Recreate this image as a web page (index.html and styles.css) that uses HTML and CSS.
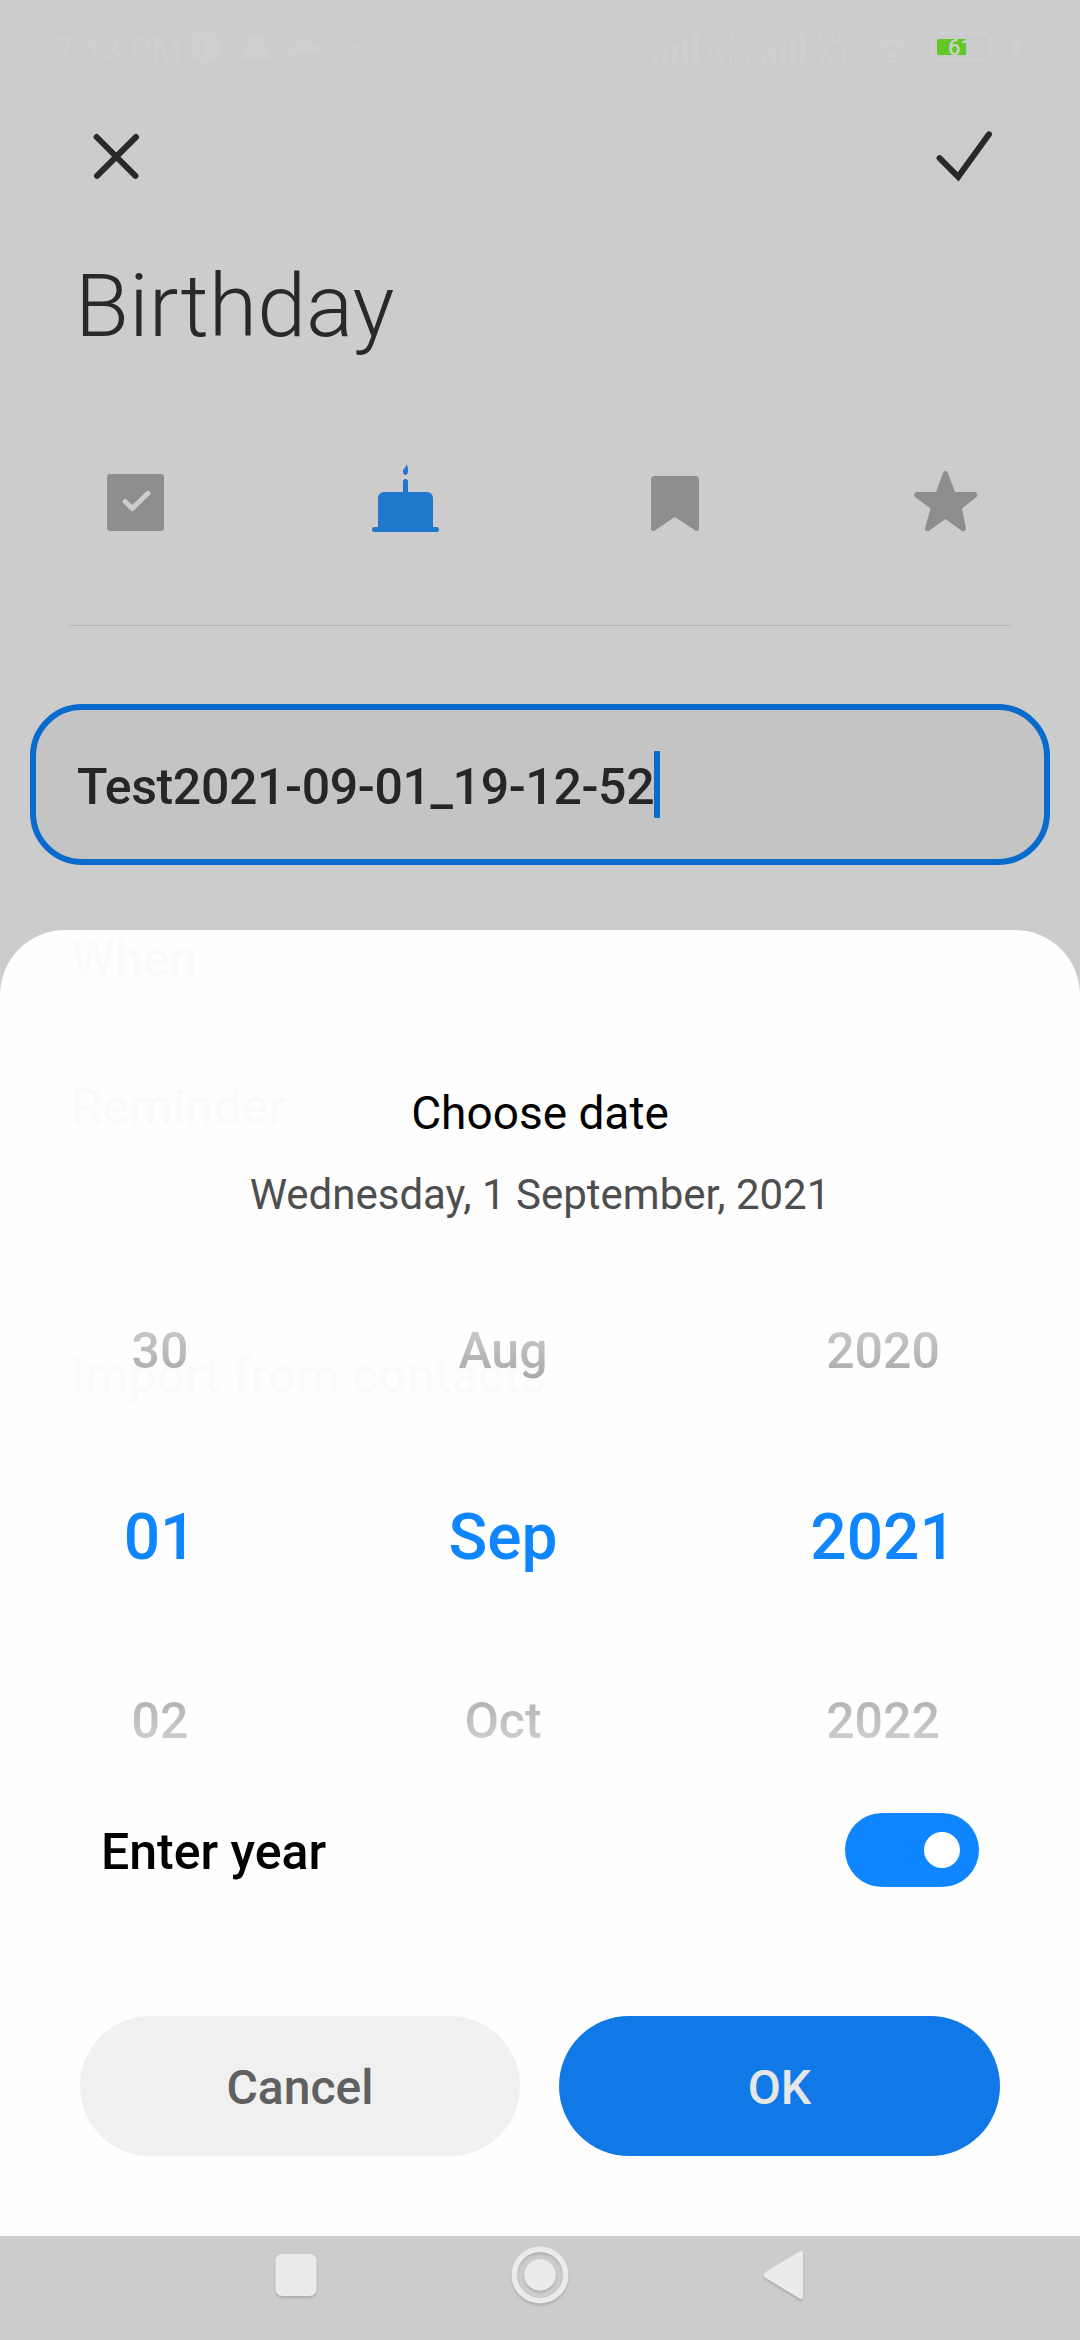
FILE: index.html
```html
<!DOCTYPE html>
<html lang="en">
<head>
<meta charset="utf-8">
<title>Birthday</title>
<link rel="stylesheet" href="styles.css">
</head>
<body>
<div class="screen">
  <div class="status">
    <span class="clock">7:13 PM</span>
    <svg class="notifs" width="210" height="40" viewBox="186 28 210 40">
      <path fill-rule="evenodd" d="M206 31a16 16 0 1 0 .1 0zM199 38h4v18h-4zM208 38h4v4h-4z"/>
      <path d="M240 58q0-4 4-6 2-4 4-14 8-10 16 0 2 10 4 14 4 2 4 6-4 2-8 0-8 4-16 0-4 2-8 0z"/>
      <path d="M290 54q-2-6 5-9 4-8 12-6l13 9q4 4 2 6z"/>
      <circle cx="355" cy="47" r="3"/><circle cx="370" cy="47" r="3"/><circle cx="384" cy="47" r="3"/>
    </svg>
    <span class="spacer"></span>
    <svg class="signal" width="50" height="32" viewBox="0 0 50 32"><path d="M1 30v-3q2-4 7-4v7zM12 17h6v13h-6zM22 11h6v19h-6zM32 5h6v25h-6zM42 0h6v30h-6z"/></svg>
    <span class="vowifi">Vo<br>WiFi</span>
    <svg class="signal" width="50" height="32" viewBox="0 0 50 32"><path d="M1 30v-3q2-4 7-4v7zM12 17h6v13h-6zM22 11h6v19h-6zM32 5h6v25h-6zM42 0h6v30h-6z"/></svg>
    <span class="vowifi">Vo<br>WiFi</span>
    <svg class="wifi" width="36" height="28" viewBox="0 0 36 28"><path d="M1 9q17-14 34 0l-3 4q-14-11-28 0zM8 17q10-8 20 0l-4 4q-6-4-12 0zM13 23q5-3 10 0l-5 5z"/></svg>
    <div class="battery"><div class="charge"></div><span class="percent">61</span></div>
    <svg class="bolt" width="32" height="30" viewBox="-12 0 32 30"><path d="M-11 11q4 0 4 4t-4 4zM15 0 2 17h6L4 30 19 12h-7z"/></svg>
  </div>

  <div class="toolbar">
    <svg class="stroke" width="60" height="60" viewBox="86 126 60 60"><path d="M96.6 137 135.4 175.8M136 137 97 175.8"/></svg>
    <svg class="stroke" width="64" height="60" viewBox="932 126 64 60"><path stroke-linejoin="miter" d="M939.6 158.2 958.2 176.8 989 134.3"/></svg>
  </div>
  <h1 class="title">Birthday</h1>

  <div class="types">
    <svg width="80" height="80" viewBox="95 462 80 80"><rect x="107" y="474" width="57" height="57" rx="3"/><path class="tick" d="M125.2 501.5 132.3 508.5 148 493.3"/></svg>
    <svg class="active" width="80" height="80" viewBox="365 462 80 80"><path d="M374.500 527H378v-29a6 6 0 0 1 6-6h19v-10.500a2.500 2.500 0 0 1 5 0V492h19a6 6 0 0 1 6 6v29h3.500a2.500 2.500 0 0 1 0 5h-62a2.500 2.500 0 0 1 0-5zM406.700 464q1.700 4 1.300 7.500-.5 3.500-3 3.500-2-.5-2-3.500 0-2 2-4 1.200-1.500 1.700-3.500z"/></svg>
    <svg width="80" height="80" viewBox="635 462 80 80"><path d="M651 480a4 4 0 0 1 4-4h40a4 4 0 0 1 4 4v49q0 2.500-3 2l-20-13.300q-1.300-.9-2.600 0L654 531q-3 .5-3-2z"/></svg>
    <svg width="80" height="80" viewBox="905 462 80 80"><path d="M943.300 472.200q2-2.200 4.200 0L955 492h20q3.500 1.500 1.500 5L962 508.500l4 20.500q-1 3-4 2l-16.600-12L928.700 531q-3 .8-3.900-2l5.700-20.500L915 497q-2.200-3.500 1-5h20z"/></svg>
  </div>
  <div class="divider"></div>

  <div class="name-field"><span class="name">Test2021-09-01_19-12-52</span><span class="caret"></span></div>

  <div class="row"><span class="label">When</span><span class="value">Wednesday, 01 September 2021</span></div>
  <div class="row"><span class="label">Reminder</span><span class="value">3 days in advance and on that day at<br>10:00 am</span></div>
  <div class="row import"><span class="label">Import from contacts</span></div>

  <div class="nav">
    <svg width="80" height="80" viewBox="-40 -40 80 80"><rect x="-20.500" y="-21" width="41" height="42" rx="7"/></svg>
    <svg width="80" height="80" viewBox="-40 -40 80 80"><circle class="ring" r="25.700"/><circle r="15.700"/></svg>
    <svg width="80" height="80" viewBox="-40 -40 80 80"><path d="M-19-2.500 15.500-23.500q3.500-1.500 3.500 2v43q0 3.500-3.500 2L-19 2.500q-2.500-2.500 0-5z"/></svg>
  </div>

  <div class="sheet">
    <div class="sheet-title">Choose date</div>
    <div class="sheet-date">Wednesday, 1 September, 2021</div>
    <div class="picker">
      <span class="prev">30</span><span class="prev">Aug</span><span class="prev">2020</span>
      <span class="current">01</span><span class="current">Sep</span><span class="current">2021</span>
      <span class="next">02</span><span class="next">Oct</span><span class="next">2022</span>
    </div>
    <div class="year-row"><span class="year-label">Enter year</span><div class="toggle"><div class="knob"></div></div></div>
    <div class="buttons"><div class="button">Cancel</div><div class="button primary">OK</div></div>
  </div>
</div>
</body>
</html>
```
FILE: styles.css
```css
* { box-sizing: border-box; }
body { margin: 0; background: #ccc; font-family: Roboto, "Liberation Sans", sans-serif; }
svg { display: block; flex: none; }

.screen { position: relative; width: 1080px; height: 2340px; overflow: hidden; display: flex; flex-direction: column; background: #ccc; color: #292929; white-space: nowrap; }

.status { display: flex; align-items: center; height: 94px; padding: 0 54px 0 55px; color: #cfcfcf; fill: #cfcfcf; flex: none; }
.clock { width: 131px; padding-top: 3px; font-size: 34px; line-height: 40px; font-weight: 500; }
.notifs { margin-top: 2px; }
.spacer { flex: 1; }
.signal { margin-top: 4px; }
.vowifi { width: 58px; padding-left: 8px; font-size: 22px; line-height: 21px; font-weight: 500; }
.wifi { margin: 10px 20px 0 8px; }
.battery { position: relative; width: 62px; height: 30px; padding: 4px; border: 3px solid #cfcfcf; border-radius: 8px; }
.charge { width: 30px; height: 16px; border-radius: 2px; background: #62c924; }
.percent { position: absolute; left: 15px; top: 2px; font-size: 22px; line-height: 22px; font-weight: 500; }
.bolt { margin-left: 2px; }

.toolbar { display: flex; justify-content: space-between; align-items: center; height: 124px; padding: 0 84px 0 86px; flex: none; }
.stroke { fill: none; stroke: #292929; stroke-width: 6; stroke-linecap: round; }
.title { margin: 36px 0 0 75px; font-size: 88px; line-height: 104px; font-weight: 300; }

.types { display: grid; grid-template-columns: repeat(4, 1fr); justify-items: center; margin-top: 104px; fill: #8e8e8e; }
.types .active { fill: #2078cc; }
.tick { fill: none; stroke: #ccc; stroke-width: 5; stroke-linecap: round; stroke-linejoin: round; }
.divider { height: 1px; margin: 83px 70px 0; background: #b6b6b6; flex: none; }

.name-field { display: flex; align-items: center; height: 161px; margin: 78px 30px 20px; padding-left: 41px; border: 6px solid #0a6bcf; border-radius: 52px; background: #c4c4c4; flex: none; }
.name { padding-top: 5px; font-size: 50px; line-height: 60px; font-weight: 500; letter-spacing: -.36px; color: #262626; }
.caret { width: 6px; height: 67px; border-radius: 1px; background: #0a6bcf; }

.row { display: flex; justify-content: space-between; align-items: center; height: 148px; padding: 0 124px 0 71px; flex: none; }
.label { font-size: 50px; font-weight: 500; }
.value { font-size: 37.400px; line-height: 44px; text-align: right; color: #8c8c8c; }
.import { margin-top: 121px; }

.nav { display: grid; grid-template-columns: repeat(3, 244px); justify-content: center; justify-items: center; height: 104px; margin-top: auto; flex: none; fill: #ebebeb; }
.nav svg { margin-top: -1px; filter: drop-shadow(0 2px 1px rgba(0, 0, 0, .15)); }
.ring { fill: none; stroke: #ebebeb; stroke-width: 5.500; }

.sheet { position: absolute; left: 0; top: 930px; width: 1080px; height: 1306px; padding-top: 153px; border-radius: 65px 65px 0 0; background: rgba(255, 255, 255, .98); }
.sheet-title { text-align: center; font-size: 46px; line-height: 60px; color: #000; }
.sheet-date { margin-top: 24px; text-align: center; font-size: 42px; line-height: 56px; color: #4e4e4e; }
.picker { display: grid; grid-template-columns: 320px 366px 394px; grid-template-rows: repeat(3, 185px); align-items: center; justify-items: center; margin-top: 35px; font-weight: 500; }
.prev, .next { font-size: 50px; line-height: 58px; color: transparent; background-clip: text; -webkit-background-clip: text; }
.prev { background-image: linear-gradient(#cdcdcd, #a8a8a8); }
.next { background-image: linear-gradient(#aeaeae, #d4d4d4); }
.current { padding-top: 5px; font-size: 64px; line-height: 76px; color: #0f86ff; }
.year-row { display: flex; justify-content: space-between; align-items: center; height: 74px; padding: 0 101px; }
.year-label { padding-top: 4px; font-size: 50px; line-height: 60px; font-weight: 500; color: #000; }
.toggle { display: flex; justify-content: flex-end; align-items: center; width: 134px; height: 74px; padding-right: 19px; border-radius: 37px; background: #0f86ff; }
.knob { width: 36px; height: 36px; border-radius: 50%; background: #fff; }
.buttons { display: grid; grid-template-columns: 440px 441px; gap: 39px; margin: 129px 80px 0; }
.button { height: 140px; padding-top: 2px; border-radius: 70px; background: #f0f0f0; color: #606060; text-align: center; font-size: 48px; line-height: 140px; font-weight: 500; }
.primary { background: #1079e7; color: #e6e6e6; }
```
